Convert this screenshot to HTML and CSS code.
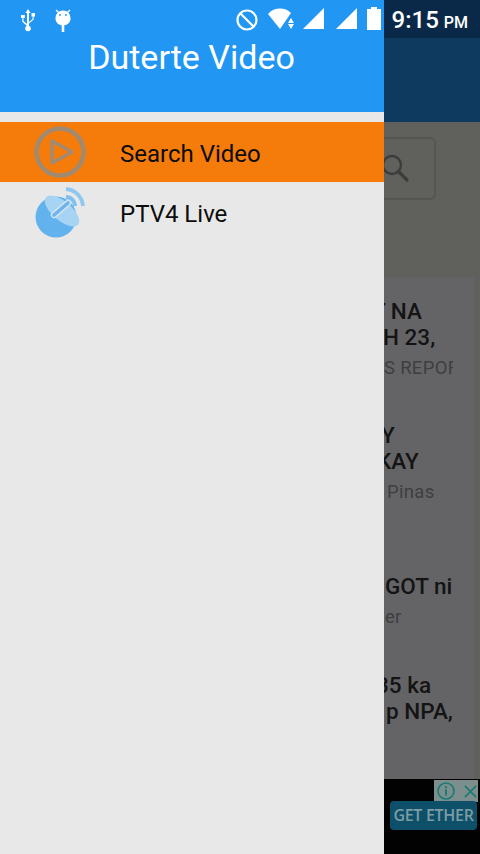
FILE: index.html
```html
<!DOCTYPE html>
<html lang="en">
<head>
<meta charset="utf-8">
<title>Duterte Video</title>
<link rel="stylesheet" href="styles.css">
</head>
<body>
<div class="screen">
  <main class="app">
    <div class="app-status"></div>
    <div class="app-bar"></div>
    <section class="search-area">
      <div class="search-box">
        <svg class="search-icon" viewBox="0 0 30 30"><circle cx="12" cy="11" r="9" fill="none" stroke="#3c3c3c" stroke-width="2.4"/><path d="M18.5 17.5L27 26" stroke="#3c3c3c" stroke-width="3.2" stroke-linecap="round"/></svg>
      </div>
    </section>
    <section class="list">
      <article class="card card-1">
        <p class="title l-tna">T NA</p>
        <p class="title l-h23">H 23,</p>
        <p class="sub l-rep">S REPORT</p>
      </article>
      <article class="card card-2">
        <p class="title l-y">Y</p>
        <p class="title l-kay">KAY</p>
        <p class="sub l-pinas">Pinas</p>
      </article>
      <article class="card card-3">
        <p class="title l-got">GOT ni</p>
        <p class="sub l-er">er</p>
      </article>
      <article class="card card-4">
        <p class="title l-35">35 ka</p>
        <p class="title l-npa">p NPA,</p>
      </article>
    </section>
    <aside class="ad">
      <div class="ad-choices">
        <svg class="ad-info" viewBox="0 0 20 20"><circle cx="10" cy="10" r="8" fill="none" stroke="#1a7a78" stroke-width="1.6"/><rect x="9" y="8.5" width="2" height="6" fill="#1a7a78"/><rect x="9" y="5.2" width="2" height="2" fill="#1a7a78"/></svg>
        <svg class="ad-close" viewBox="0 0 16 16"><path d="M2 2L14 14M14 2L2 14" stroke="#1a7a78" stroke-width="1.8"/></svg>
      </div>
      <div class="ad-btn">GET ETHER</div>
    </aside>
  </main>

  <nav class="drawer">
    <header class="drawer-head"><h1 class="drawer-title">Duterte Video</h1></header>
    <ul class="menu">
      <li class="menu-item active">
        <svg class="menu-icon" viewBox="0 0 60 60"><circle cx="30" cy="30" r="23.5" fill="none" stroke="#a28a70" stroke-width="4.5"/><path d="M22 19V41L42 30Z" fill="none" stroke="#a28a70" stroke-width="3.6" stroke-linejoin="round"/></svg>
        <span>Search Video</span>
      </li>
      <li class="menu-item">
        <svg class="menu-icon" viewBox="0 0 60 60"><circle cx="26" cy="35" r="20.5" fill="#62b2ee"/><ellipse cx="32" cy="29" rx="21" ry="9.5" transform="rotate(40 32 29)" fill="#a8d4f4"/><path d="M24 33L38 21" stroke="#cfe4f5" stroke-width="6.5" stroke-linecap="round"/><path d="M24 33L38 21" stroke="#6fb3e8" stroke-width="3.6" stroke-linecap="round"/><path d="M36 15C41 15 45 19 45 24" fill="none" stroke="#7fc0ef" stroke-width="3.8"/><path d="M36 7C45 8 52 14 53 24" fill="none" stroke="#8ec8f1" stroke-width="3.8"/></svg>
        <span>PTV4 Live</span>
      </li>
    </ul>
  </nav>

  <div class="status">
    <div class="status-left">
      <svg class="ic-usb" viewBox="0 0 16 24"><path d="M8 1L5.5 5H7V16L3.5 13V10H4.8V7H1V10H2.3V13.8L7 18V20H9V15.5L13.7 11.5V8.5H15V5H11.5V8.5H12.6V11L9 14V5H10.5Z" fill="#fff"/><circle cx="8" cy="20.5" r="2.8" fill="#fff"/></svg>
      <svg class="ic-droid" viewBox="0 0 16 24"><path d="M1 2L3.5 4.5M15 2L12.5 4.5" stroke="#fff" stroke-width="1.3"/><path d="M8 2.5C3.6 2.5 0.5 6 0.5 10.5C0.5 14.5 3.8 17.5 8 17.5C12.2 17.5 15.5 14.5 15.5 10.5C15.5 6 12.4 2.5 8 2.5Z" fill="#fff"/><rect x="6.7" y="16" width="2.6" height="8" fill="#fff"/><circle cx="5" cy="7" r=".9" fill="#2196f3"/><circle cx="11" cy="7" r=".9" fill="#2196f3"/></svg>
    </div>
    <div class="status-right">
      <svg class="ic-block" viewBox="0 0 24 24"><circle cx="12" cy="12" r="9.5" fill="none" stroke="#fff" stroke-width="2.2"/><path d="M5.5 5.5L18.5 18.5" stroke="#fff" stroke-width="2.2"/></svg>
      <svg class="ic-wifi" viewBox="0 0 28 22"><path d="M0 6C6 -1 17 -1 23 5L12 21Z" fill="#fff"/><path d="M23 10L26 15H20Z" fill="#fff"/><path d="M20 16H26L23 21Z" fill="#fff"/></svg>
      <svg class="ic-signal" viewBox="0 0 21 21"><path d="M0 21L21 0V21Z" fill="#fff"/></svg>
      <svg class="ic-signal" viewBox="0 0 21 21"><path d="M0 21L21 0V21Z" fill="#fff"/></svg>
      <svg class="ic-batt" viewBox="0 0 14 23"><path d="M4 0H10V2H14V23H0V2H4Z" fill="#fff"/></svg>
      <div class="clock">9:15<span class="ampm">PM</span></div>
    </div>
  </div>
</div>
</body>
</html>
```
FILE: styles.css
```css
* { box-sizing: border-box; margin: 0; padding: 0; }
html, body { width: 480px; height: 854px; overflow: hidden; background: #60605d; }
body { font-family: Roboto, "Liberation Sans", sans-serif; }
.screen { position: relative; width: 480px; height: 854px; overflow: hidden; }

/* Dimmed app behind the drawer */
.app { display: flex; flex-direction: column; width: 480px; height: 854px; background: #60605d; }
.app-status { height: 38px; background: #0a2949; }
.app-bar { height: 84px; background: #0f3a5f; }
.search-area { display: flex; justify-content: flex-end; height: 155px; padding: 15px 44px 0 0; }
.search-box { display: flex; align-items: center; justify-content: flex-end; width: 200px; height: 63px; padding-right: 24px; border: 2px solid #555554; border-radius: 6px; }
.search-icon { width: 30px; height: 30px; }
.list { flex: 1; display: flex; flex-direction: column; margin-right: 6px; background: #646466; color: #141414; overflow: hidden; }
.card { padding-left: 384px; overflow: hidden; }
.card-1 { height: 120px; padding-top: 21px; }
.card-2 { height: 125px; padding-top: 25px; }
.card-3 { height: 123px; padding-top: 51px; }
.card-4 { height: 134px; padding-top: 27px; }
.title { font-size: 22.5px; line-height: 26px; font-weight: 500; white-space: nowrap; }
.sub { width: 69px; margin-top: 5px; font-size: 18.5px; line-height: 26px; color: #3e3e40; white-space: nowrap; overflow: hidden; letter-spacing: .3px; }
.l-tna { margin-left: -12px; }
.l-h23 { margin-left: -1px; }
.l-rep { margin-left: 0; }
.l-y { margin-left: -3px; }
.l-kay { margin-left: -7px; }
.l-pinas { margin-left: 3px; }
.l-got { margin-left: 1px; }
.l-er { margin-left: 1px; }
.l-35 { margin-left: -8px; }
.l-npa { margin-left: 2px; }

.ad { position: relative; height: 75px; background: #020203; }
.ad-choices { position: absolute; top: 1px; right: 2px; display: flex; align-items: center; gap: 7px; width: 44px; height: 22px; padding-left: 2px; background: #7d8f8c; }
.ad-info { width: 20px; height: 20px; }
.ad-close { width: 15px; height: 15px; }
.ad-btn { position: absolute; top: 22px; right: 3px; width: 87px; height: 29px; border-radius: 4px; background: #0e4f6a; color: #7c9da3; font-family: "Open Sans", sans-serif; font-size: 16px; font-weight: 600; line-height: 29px; text-align: center; white-space: nowrap; letter-spacing: -.3px; }

/* Drawer */
.drawer { position: absolute; top: 0; left: 0; width: 384px; height: 854px; background: #e8e8e8; }
.drawer-head { height: 112px; padding-top: 36px; background: #2196f3; }
.drawer-title { font-size: 34px; line-height: 42px; font-weight: 400; color: #fff; text-align: center; padding-right: 1px; }
.menu { list-style: none; padding-top: 10px; }
.menu-item { display: flex; align-items: center; gap: 30px; height: 60px; padding-left: 30px; font-size: 24px; color: #0c0c0c; }
.menu-item span { position: relative; top: 2px; }
.menu-item.active { background: #f57c0a; }
.menu-icon { width: 60px; height: 60px; flex: none; }

/* Status bar */
.status { position: absolute; top: 0; left: 0; display: flex; justify-content: space-between; width: 480px; height: 38px; color: #fff; }
.status-left { display: flex; gap: 19px; padding: 8px 0 0 20px; }
.ic-usb, .ic-droid { width: 16px; height: 24px; }
.status-right { display: flex; align-items: flex-start; padding: 8px 12px 0 0; }
.ic-block { width: 24px; height: 24px; margin-right: 9px; }
.ic-wifi { width: 28px; height: 22px; margin-right: 7px; }
.ic-signal { width: 21px; height: 21px; margin-right: 12px; }
.ic-batt { width: 14px; height: 23px; margin: -1px 11px 0 -2px; }
.clock { font-size: 24px; line-height: 24px; font-weight: 500; white-space: nowrap; }
.ampm { margin-left: 5px; font-size: 16px; }
```
